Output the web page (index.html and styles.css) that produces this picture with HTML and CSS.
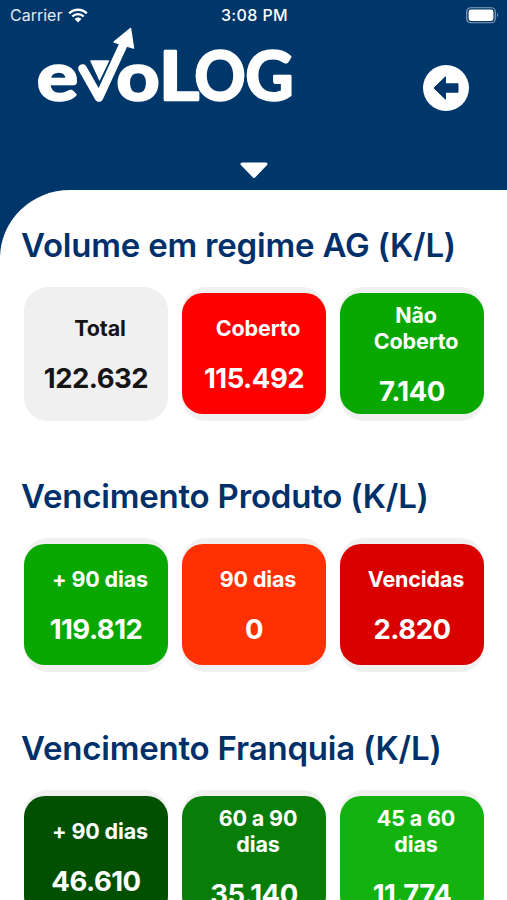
FILE: index.html
```html
<!DOCTYPE html>
<html lang="pt-BR">
<head>
  <meta charset="UTF-8" />
  <meta name="viewport" content="width=device-width, initial-scale=1.0"/>
  <title>evoLOG</title>
  <link rel="stylesheet" href="styles.css">
</head>
<body>

<header>
  <div class="status-bar">
    <div class="carrier">
      <span>Carrier</span>
      <svg class="wifi" width="20" height="15" viewBox="0 0 20 15">
        <path d="M1.2 5.3A12.6 12.6 0 0 1 18.8 5.3M4.3 8.5A8.1 8.1 0 0 1 15.7 8.5" fill="none" stroke="#fff" stroke-width="2.4"/>
        <path d="M6.6 11A4.8 4.8 0 0 1 13.4 11L10 14.6Z" fill="#fff"/>
      </svg>
    </div>
    <div class="time">3:08 PM</div>
    <svg class="battery" width="33" height="17" viewBox="0 0 33 17">
      <rect x="0.75" y="0.75" width="28.5" height="15" rx="4" fill="none" stroke="#8b9fba" stroke-width="1.2"/>
      <rect x="2.6" y="2.6" width="24.8" height="11.3" rx="2.4" fill="#fff"/>
      <path d="M31 6Q33 8 31 10.4Z" fill="#8b9fba"/>
    </svg>
  </div>

  <div class="top-row">
    <svg class="logo" width="260" height="80" viewBox="0 0 260 80">
      <g class="logo-text">
        <text x="-1" y="72" textLength="41" lengthAdjust="spacingAndGlyphs">e</text>
        <text x="78.5" y="72" textLength="43" lengthAdjust="spacingAndGlyphs">o</text>
        <text x="121" y="72" textLength="40" lengthAdjust="spacingAndGlyphs">L</text>
        <text x="156.5" y="72" textLength="51" lengthAdjust="spacingAndGlyphs">O</text>
        <text x="207.5" y="72" textLength="48" lengthAdjust="spacingAndGlyphs">G</text>
      </g>
      <!-- check mark with arrow -->
      <path d="M52 32.5H71.5L61.5 53Z" fill="#fff"/>
      <path d="M44.5 40.5L61 69.5L87 13" fill="none" stroke="#00376a" stroke-width="11"/>
      <path d="M44.5 40.5L61 69.5L87 13" fill="none" stroke="#fff" stroke-width="8.6" stroke-linejoin="round" stroke-linecap="round"/>
      <path d="M92.5 0.5L95.5 20L76 14Z" fill="#fff" stroke="#fff" stroke-width="1.5" stroke-linejoin="round"/>
      <path d="M53 32.5H70.5L61.5 51Z" fill="#fff"/>
    </svg>
    <button class="back-btn" aria-label="Voltar">
      <svg width="26" height="24" viewBox="0 0 26 24">
        <path d="M1 12L12.5 0.8V7.8H25V16.2H12.5V23.2Z" fill="#00376a" stroke="#00376a" stroke-linejoin="round"/>
      </svg>
    </button>
  </div>

  <svg class="caret" width="28" height="17" viewBox="0 0 28 17">
    <path d="M2 2H26L14 14.5Z" fill="#fff" stroke="#fff" stroke-width="3" stroke-linejoin="round"/>
  </svg>
</header>

<main>
  <section>
    <h2>Volume em regime AG (K/L)</h2>
    <div class="cards">
      <div class="card"><div class="card-body total">
        <div class="label">Total</div>
        <div class="value">122.632</div>
      </div></div>
      <div class="card"><div class="card-body red">
        <div class="label">Coberto</div>
        <div class="value">115.492</div>
      </div></div>
      <div class="card"><div class="card-body green">
        <div class="label">Não Coberto</div>
        <div class="value">7.140</div>
      </div></div>
    </div>
  </section>

  <section>
    <h2>Vencimento Produto (K/L)</h2>
    <div class="cards">
      <div class="card"><div class="card-body green">
        <div class="label">+ 90 dias</div>
        <div class="value">119.812</div>
      </div></div>
      <div class="card"><div class="card-body orange">
        <div class="label">90 dias</div>
        <div class="value">0</div>
      </div></div>
      <div class="card"><div class="card-body dark-red">
        <div class="label">Vencidas</div>
        <div class="value">2.820</div>
      </div></div>
    </div>
  </section>

  <section>
    <h2>Vencimento Franquia (K/L)</h2>
    <div class="cards">
      <div class="card"><div class="card-body dark-green">
        <div class="label">+ 90 dias</div>
        <div class="value">46.610</div>
      </div></div>
      <div class="card"><div class="card-body mid-green">
        <div class="label">60 a 90 dias</div>
        <div class="value">35.140</div>
      </div></div>
      <div class="card"><div class="card-body light-green">
        <div class="label">45 a 60 dias</div>
        <div class="value">11.774</div>
      </div></div>
    </div>
  </section>
</main>

</body>
</html>
```
FILE: styles.css
```css
* {
  box-sizing: border-box;
}

body {
  font-family: Inter, "Liberation Sans", sans-serif;
  margin: 0;
  height: 900px;
  overflow: hidden;
  background: #00376a;
}

header {
  height: 189.5px;
  display: flex;
  flex-direction: column;
  color: white;
}

.status-bar {
  height: 28px;
  padding: 2px 8px 0 10px;
  display: grid;
  grid-template-columns: 1fr auto 1fr;
  align-items: center;
  font-size: 16px;
}

.carrier {
  display: flex;
  align-items: center;
  gap: 6px;
  color: #e3eaf2;
}

.time {
  font-weight: 500;
  letter-spacing: 0.4px;
}

.battery {
  justify-self: end;
}

.top-row {
  display: flex;
  justify-content: space-between;
  align-items: flex-start;
  padding: 0 38px;
  height: 132px;
}

.logo {
  overflow: visible;
}

.logo-text {
  font-family: Lato, sans-serif;
  font-weight: 700;
  font-size: 67px;
  fill: white;
  stroke: white;
  stroke-width: 2.6px;
  stroke-linejoin: round;
}

.back-btn {
  width: 46px;
  height: 46px;
  margin-top: 37px;
  padding: 0;
  border: none;
  border-radius: 50%;
  background: white;
  display: flex;
  align-items: center;
  justify-content: center;
  cursor: pointer;
}

.caret {
  align-self: center;
  margin-top: 2px;
}

main {
  height: 710.5px;
  padding: 37px 21px 0;
  background: white;
  border-top-left-radius: 70px 68px;
  overflow: hidden;
}

section {
  height: 251.5px;
}

h2 {
  margin: 0 0 20px;
  height: 40px;
  line-height: 37px;
  font-size: 33px;
  font-weight: 600;
  letter-spacing: -0.2px;
  color: #00306a;
  white-space: nowrap;
}

.cards {
  display: flex;
  gap: 14px;
  padding-left: 3px;
}

.card {
  width: 144px;
  height: 134px;
  padding: 6px 0 7px;
  border-radius: 24px;
  background: #f0f0f0;
}

.card-body {
  height: 121px;
  border-radius: 21px;
  display: flex;
  flex-direction: column;
  justify-content: center;
  text-align: center;
  color: white;
}

.label {
  padding: 0 16px 0 24px;
  font-size: 21.5px;
  line-height: 26px;
  font-weight: 700;
  letter-spacing: -0.15px;
}

.value {
  margin-top: 23px;
  font-size: 27.5px;
  line-height: 28px;
  font-weight: 700;
  letter-spacing: -0.5px;
}

.total {
  color: #151515;
}

.red {
  background: #ff0000;
}

.green {
  background: #08a800;
}

.orange {
  background: #ff3004;
}

.dark-red {
  background: #d90000;
}

.dark-green {
  background: #005000;
}

.mid-green {
  background: #087d08;
}

.light-green {
  background: #12b30e;
}
```
